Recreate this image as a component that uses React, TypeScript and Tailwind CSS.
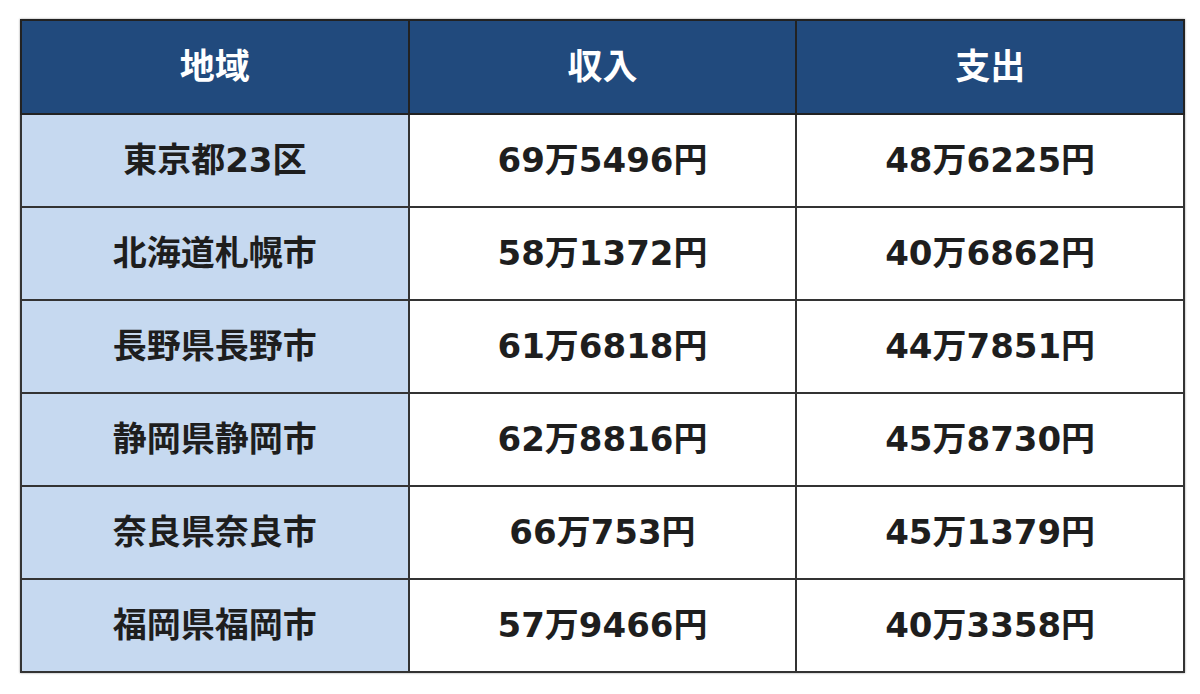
import React from "react";

const rows = [
  ["東京都23区", "69万5496円", "48万6225円"],
  ["北海道札幌市", "58万1372円", "40万6862円"],
  ["長野県長野市", "61万6818円", "44万7851円"],
  ["静岡県静岡市", "62万8816円", "45万8730円"],
  ["奈良県奈良市", "66万753円", "45万1379円"],
  ["福岡県福岡市", "57万9466円", "40万3358円"],
];

export default function App() {
  return (
    <div className="w-[1200px] h-[694px] bg-white pt-[19px] pl-[20px] font-['DejaVu_Sans','Noto_Sans_CJK_JP',sans-serif]">
      <table className="w-[1165px] table-fixed border-collapse border-2 border-[#333] shadow-[0_0_2px_rgba(0,0,0,0.4)]">
        <thead>
          <tr className="h-[94px] bg-[#214a7d] text-white text-[35px]">
            <th className="border-2 border-[#222] font-semibold">地域</th>
            <th className="border-2 border-[#222] font-semibold">収入</th>
            <th className="border-2 border-[#222] font-semibold">支出</th>
          </tr>
        </thead>
        <tbody className="text-[34px] text-[#1e1e1e] font-semibold">
          {rows.map((r) => (
            <tr key={r[0]} className="h-[93px]">
              <td className="border-2 border-[#333] bg-[#c6d9f0] text-center">{r[0]}</td>
              <td className="border-2 border-[#333] text-center">{r[1]}</td>
              <td className="border-2 border-[#333] text-center">{r[2]}</td>
            </tr>
          ))}
        </tbody>
      </table>
    </div>
  );
}
